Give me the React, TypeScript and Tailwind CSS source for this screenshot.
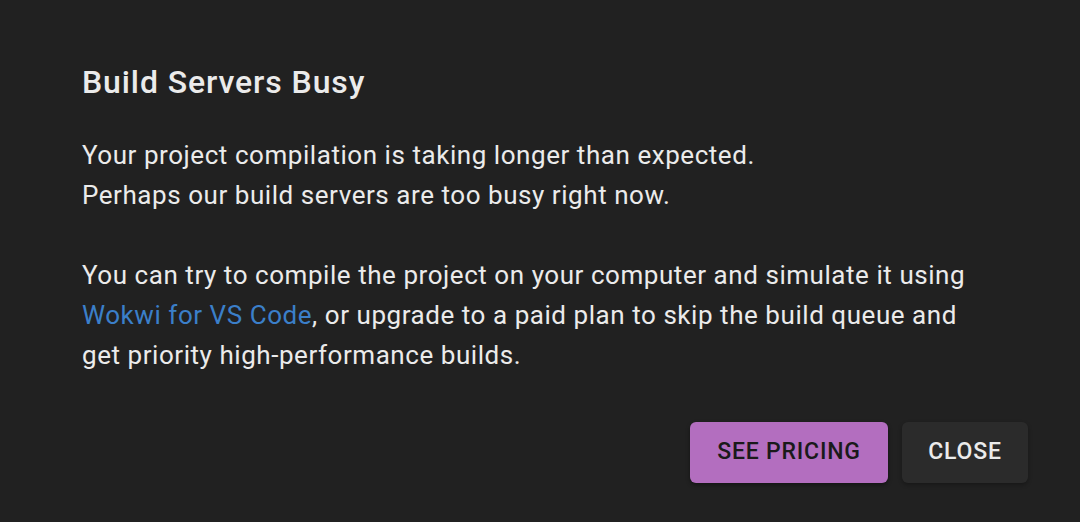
import React from 'react';

const App: React.FC = () => {
    return (
        <div className="w-[1080px] h-[522px] bg-[#212121] text-[#ebebeb] font-['Roboto',sans-serif] overflow-hidden">
            <div className="pl-[82px] pr-[52px] pt-[60px]">
                <h2 className="text-[32px] leading-[44px] font-medium tracking-[0.9px]">Build Servers Busy</h2>
                <div className="mt-[31px] text-[26px] leading-[40px] tracking-[0.55px] whitespace-nowrap">
                    <p>
                        Your project compilation is taking longer than expected.
                        <br />
                        Perhaps our build servers are too busy right now.
                    </p>
                    <p className="mt-[40px]">
                        You can try to compile the project on your computer and simulate it using
                        <br />
                        <a href="#" className="text-[#3b7fc9]">Wokwi for VS Code</a>, or upgrade to a paid plan to skip the build queue and
                        <br />
                        get priority high-performance builds.
                    </p>
                </div>
            </div>
            <div className="flex justify-end gap-[14px] pr-[52px] mt-[47px]">
                <button className="h-[61px] w-[198px] rounded-[6px] bg-[#b36ebf] text-[#1a1a1a] text-[23px] font-medium tracking-[0.8px] shadow-[0_2px_4px_rgba(0,0,0,0.4)]">
                    SEE PRICING
                </button>
                <button className="h-[61px] w-[126px] rounded-[6px] bg-[#2b2b2b] text-[#ebebeb] text-[23px] font-medium tracking-[0.8px] shadow-[0_2px_4px_rgba(0,0,0,0.3)]">
                    CLOSE
                </button>
            </div>
        </div>
    );
};

export default App;
